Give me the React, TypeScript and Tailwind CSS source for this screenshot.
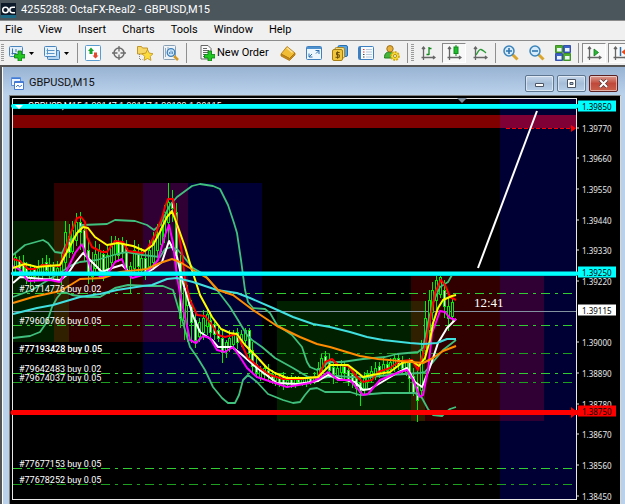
import type { ReactNode } from 'react';
import clsx from 'clsx';

const MENU = ['File', 'View', 'Insert', 'Charts', 'Tools', 'Window', 'Help'];

// Plot box in chart units; prices run linearly from top to bottom
const BOX = { x: 12, y: 98, w: 565, h: 402 };
const PRICE_TOP = 1.39877;
const PRICE_SPAN = 0.01443;

const fraction = (price: number) => (PRICE_TOP - price) / PRICE_SPAN;
const toY = (price: number) => Math.round(BOX.y + fraction(price) * BOX.h) - 0.5;
const toTop = (price: number) => `${(fraction(price) * 100).toFixed(2)}%`;

const TICKS = [1.3977, 1.3966, 1.3955, 1.3944, 1.3933, 1.3922, 1.39, 1.3889, 1.3878, 1.3867, 1.3856, 1.3845];

const MARKS = [
  { price: 1.3985, style: 'bg-[#00ffff] text-black' },
  { price: 1.39252, text: '1.39250', style: 'bg-[#00ffff] text-black' },
  { price: 1.39115, style: 'bg-white text-black' },
  { price: 1.38752, text: '1.38750', style: 'bg-[#ff0000] text-black' },
];

const ORDERS = [
  { id: '#79714776', lots: '0.02', price: 1.39172, dim: false },
  { id: '#79606766', lots: '0.05', price: 1.3906, dim: false },
  { id: '#77193428', lots: '0.05', price: 1.38957, dim: true, strong: true },
  { id: '#79642483', lots: '0.02', price: 1.38888, dim: false },
  { id: '#79674037', lots: '0.05', price: 1.38853, dim: true },
  { id: '#77677153', lots: '0.05', price: 1.38544, dim: false },
  { id: '#77678252', lots: '0.05', price: 1.38487, dim: true },
];

// Session boxes, added on top of each other like light
const SESSIONS = [
  { x: 13, y: 221, w: 56, h: 121, fill: '#002000' },
  { x: 54, y: 183, w: 134, h: 159, fill: '#300000' },
  { x: 143, y: 183, w: 119, h: 200, fill: '#000035' },
  { x: 277, y: 301, w: 148, h: 120, fill: '#002000' },
  { x: 411, y: 276, w: 133, h: 145, fill: '#300000' },
  { x: 500, y: 99, w: 76, h: 400, fill: '#000035' },
  { x: 13, y: 115, w: 563, h: 13, fill: '#800000' },
];

const CURVES = [
  {
    color: '#3fc07c',
    width: 1.8,
    points:
      '13,255 25,245 43,240 48,243 55,252 62,253 67,243 75,237 82,225 107,224 115,220 135,221 147,225 154,230 160,225 170,205 177,197 192,186 200,184 213,186 220,189 228,205 234,223 237,233 241,260 245,290 248,302 253,308 265,309 270,313 277,325 292,335 302,347 307,362 310,367 317,370 322,368 328,362 342,362 363,359 385,357 397,354 418,352 423,348 426,333 428,322 433,303 440,287 448,282 452,275',
  },
  {
    color: '#3fc07c',
    width: 1.8,
    points:
      '13,297 32,290 53,277 72,265 80,262 97,260 117,254 127,252 143,255 160,257 165,249 172,247 178,250 193,268 205,275 217,290 230,307 238,320 247,335 252,340 262,347 275,358 293,368 308,377 320,378 337,376 350,377 370,377 390,375 420,373 425,372 433,362 443,350 456,340',
  },
  {
    color: '#3fc07c',
    width: 1.8,
    points:
      '13,338 30,336 40,332 47,322 52,307 57,298 62,292 67,293 72,295 87,297 100,297 115,288 128,285 150,286 163,286 173,290 178,307 183,323 187,337 190,347 197,357 205,370 213,387 222,398 228,403 235,403 239,395 243,380 248,375 257,382 268,394 283,400 293,403 300,402 305,395 310,389 317,388 325,392 350,392 360,395 383,393 415,393 422,398 428,409 433,415 442,416 445,413 450,409 456,407',
  },
  {
    color: '#ffffff',
    width: 2,
    points:
      '13,283 20,277 43,279 60,280 67,275 75,263 83,253 90,260 102,272 112,268 122,265 130,273 143,275 153,269 162,262 169,241 177,257 183,283 193,316 200,332 212,340 218,347 232,347 240,353 257,368 277,383 297,384 318,381 328,375 340,379 355,382 363,390 370,389 382,382 397,373 407,368 415,382 422,387 430,367 438,343 447,328 456,319',
  },
  {
    color: '#ff00ff',
    width: 2,
    points:
      '13,266 20,270 28,281 50,280 60,282 67,270 75,253 82,244 87,257 92,272 102,277 107,275 115,262 122,259 127,272 132,278 143,275 152,267 158,260 165,235 169,225 173,243 177,277 182,303 187,326 190,340 196,343 203,336 210,338 217,350 225,352 233,347 240,357 247,368 257,377 275,383 287,387 310,383 320,378 328,372 338,380 350,380 363,395 368,394 380,380 397,373 407,370 413,380 420,397 423,395 428,370 432,333 440,311 445,312 450,318 456,320',
  },
  {
    color: '#ff0000',
    width: 2,
    points:
      '13,259 20,261 28,269 35,269 42,265 60,266 65,250 70,235 77,218 81,217 85,222 87,237 92,247 102,252 107,252 115,241 123,242 128,251 143,253 148,248 155,235 162,218 165,207 168,199 173,199 176,218 182,253 185,280 190,300 197,315 205,316 212,325 218,335 225,337 237,334 242,345 248,358 260,368 270,375 283,379 300,379 318,377 325,362 332,359 338,365 348,366 357,377 363,382 372,380 378,372 390,368 400,361 412,360 418,370 425,347 430,320 435,293 441,280 445,285 450,297 456,300',
  },
  {
    color: '#ffff00',
    width: 2,
    points:
      '13,268 25,264 37,267 60,265 68,250 77,233 83,227 88,228 95,237 107,245 118,243 133,246 145,251 153,245 160,232 167,217 172,211 178,227 185,247 192,270 200,295 212,317 221,329 230,333 237,334 245,345 257,357 267,368 275,373 287,378 307,378 318,377 330,365 348,365 357,372 363,377 372,375 390,372 402,363 412,361 419,366 425,358 430,340 433,323 438,308 443,300 452,296 456,295',
  },
  {
    color: '#40e0e0',
    width: 2,
    points:
      '13,314 37,308 53,305 80,297 100,294 117,290 143,286 152,285 167,279 177,278 193,282 217,290 237,293 250,298 273,308 293,317 313,324 330,327 350,332 367,337 383,340 410,343 423,344 437,343 447,339 456,339',
  },
  {
    color: '#ff8c00',
    width: 2,
    points:
      '13,303 33,297 60,291 72,284 80,279 103,278 120,272 147,269 160,263 172,259 180,262 193,270 207,278 218,290 233,295 253,310 277,326 300,337 317,344 330,347 360,356 378,359 400,361 423,363 433,358 443,351 456,346',
  },
];

// high, body top, body bottom, low, 1 = rising
type Candle = [number, number, number, number, number];
const CANDLE_START = 15;
const CANDLE_STEP = 3.83;
const CANDLES: Candle[] = [
  [253, 257, 266, 272, 1], [256, 260, 268, 274, 0], [255, 262, 272, 277, 0], [262, 268, 279, 284, 0],
  [264, 272, 278, 287, 1], [266, 268, 276, 283, 0], [260, 268, 275, 281, 1], [258, 264, 272, 279, 1],
  [255, 262, 270, 276, 0], [258, 264, 272, 281, 1], [262, 266, 271, 281, 0], [261, 268, 274, 282, 1],
  [254, 262, 272, 285, 1], [221, 232, 262, 270, 1], [224, 236, 252, 258, 0], [221, 230, 251, 254, 1],
  [213, 222, 240, 246, 1], [212, 222, 232, 250, 0], [226, 230, 252, 262, 0], [240, 250, 272, 284, 0],
  [252, 262, 276, 282, 1], [241, 254, 268, 275, 1], [244, 250, 270, 278, 1], [250, 254, 276, 281, 0],
  [245, 255, 268, 272, 1], [236, 244, 262, 270, 1], [236, 240, 254, 263, 1], [238, 243, 255, 262, 0],
  [237, 242, 252, 260, 0], [240, 248, 268, 274, 0], [262, 266, 274, 293, 1], [240, 250, 268, 274, 1],
  [244, 252, 266, 276, 0], [248, 258, 270, 276, 1], [252, 258, 272, 280, 0], [240, 250, 266, 276, 1],
  [232, 241, 262, 270, 1], [224, 234, 250, 258, 1], [221, 228, 244, 252, 1], [205, 212, 236, 243, 1],
  [183, 202, 222, 240, 1], [190, 202, 208, 222, 0], [203, 212, 255, 275, 0], [255, 262, 318, 328, 0],
  [275, 288, 320, 340, 1], [285, 296, 305, 342, 1], [300, 306, 322, 343, 0], [312, 320, 340, 348, 0],
  [318, 322, 336, 342, 1], [310, 318, 332, 340, 1], [309, 314, 326, 335, 1], [312, 320, 332, 338, 0],
  [322, 324, 334, 340, 0], [326, 330, 338, 342, 0], [330, 338, 352, 363, 0], [340, 342, 350, 358, 1],
  [330, 338, 346, 352, 1], [330, 334, 344, 350, 1], [328, 332, 342, 349, 0], [330, 334, 342, 347, 1],
  [328, 330, 340, 346, 1], [328, 330, 353, 358, 0], [342, 350, 366, 373, 0], [358, 364, 372, 378, 0],
  [366, 370, 377, 381, 1], [366, 368, 374, 380, 1], [364, 370, 376, 382, 0], [370, 374, 379, 384, 0],
  [372, 376, 380, 386, 1], [374, 377, 382, 387, 0], [372, 376, 383, 390, 0], [376, 380, 384, 388, 1],
  [375, 378, 383, 388, 0], [376, 379, 384, 388, 1], [376, 378, 382, 386, 0], [377, 379, 383, 386, 1],
  [375, 377, 383, 387, 1], [376, 378, 382, 385, 0], [372, 376, 381, 384, 1], [362, 368, 378, 382, 1],
  [354, 358, 372, 378, 1], [351, 356, 362, 370, 0], [354, 360, 370, 378, 0], [360, 367, 374, 384, 0],
  [364, 368, 376, 381, 1], [360, 364, 372, 378, 1], [362, 366, 373, 380, 0], [366, 370, 380, 386, 0],
  [370, 374, 382, 388, 0], [372, 378, 388, 396, 0], [376, 382, 392, 406, 0], [372, 378, 388, 394, 1],
  [370, 374, 382, 388, 1], [366, 371, 379, 383, 1], [362, 368, 376, 380, 1], [362, 366, 372, 378, 0],
  [358, 364, 371, 376, 1], [361, 364, 370, 374, 0], [358, 362, 369, 373, 1], [354, 358, 367, 372, 1],
  [354, 358, 364, 370, 0], [356, 360, 368, 374, 0], [360, 362, 372, 376, 1], [358, 362, 378, 393, 0],
  [368, 376, 392, 396, 0], [370, 386, 400, 422, 0], [340, 350, 390, 396, 1], [301, 318, 350, 360, 1],
  [290, 300, 330, 340, 1], [282, 290, 312, 320, 1], [275, 280, 300, 310, 1], [275, 277, 294, 298, 1],
  [280, 290, 306, 318, 0], [298, 306, 318, 331, 1], [299, 302, 316, 322, 1],
];

function Chart() {
  return (
    <svg
      className="absolute inset-0 h-full w-full overflow-visible"
      viewBox={`${BOX.x} ${BOX.y} ${BOX.w} ${BOX.h}`}
      preserveAspectRatio="none"
      role="img"
      aria-label="GBPUSD M15 candles"
    >
      <g className="isolate" shapeRendering="crispEdges">
        <rect x="12" y="98" width="565" height="402" fill="#000" />
        {SESSIONS.map((s, i) => (
          <rect key={i} className="mix-blend-screen" x={s.x} y={s.y} width={s.w} height={s.h} fill={s.fill} />
        ))}
      </g>

      <g shapeRendering="crispEdges">
        <path d="M13 311.5H576" stroke="#8394a0" />
        {ORDERS.map((o) => (
          <path
            key={o.id}
            d={`M13 ${toY(o.price)}H576`}
            stroke={o.dim ? '#1f9f1f' : '#32cd32'}
            strokeDasharray="9 5 3 5"
          />
        ))}
      </g>

      {CANDLES.map(([high, top, bottom, low, up], i) => {
        const x = Math.round(CANDLE_START + i * CANDLE_STEP);
        return (
          <g key={i} shapeRendering="crispEdges" stroke="#00ee00">
            <path d={`M${x + 0.5} ${high}V${low}`} />
            <rect x={x - 0.5} y={top + 0.5} width="2" height={bottom - top} fill={up ? '#000' : '#fff'} />
          </g>
        );
      })}

      {CURVES.map((c, i) => (
        <polyline key={i} points={c.points} fill="none" stroke={c.color} strokeWidth={c.width} strokeLinejoin="round" />
      ))}

      {/* Take profit */}
      <path d="M506 128.5H571" stroke="#ff0000" strokeDasharray="4 2" />
      <path d="M571 125l5 3.500-5 3.500z" fill="#ff0000" />
      <path d="M478 268L537 111" stroke="#fff" strokeWidth="2" />

      {/* Frame */}
      <path d="M12.500 500V98.500H576.500V500M12 499.500H577" fill="none" stroke="#e8e8e8" shapeRendering="crispEdges" />
      <path d="M457 98h10l-5 5z" fill="#7c8c9c" />
    </svg>
  );
}

// Horizontal levels lie over the header text
function Levels() {
  return (
    <svg
      className="absolute inset-0 h-full w-full overflow-visible"
      viewBox={`${BOX.x} ${BOX.y} ${BOX.w} ${BOX.h}`}
      preserveAspectRatio="none"
      aria-hidden="true"
    >
      <path d="M13 106H577M13 273.500H577" stroke="#00ffff" strokeWidth="4" strokeLinecap="round" />
      <path d="M13 108.500H577M13 275.500H577" stroke="#00d0d8" />
      <path d="M13 412.500H577" stroke="#ff0000" strokeWidth="5" strokeLinecap="round" />
      <path d="M571 407l7 5.500-7 5.500z" fill="#ff0000" />
      <path d="M15 105h8l-4 4z" fill="#fff" />
    </svg>
  );
}

function Icon({ children }: { children: ReactNode }) {
  return (
    <svg className="h-4 w-4 shrink-0" viewBox="0 0 16 16" fill="none" aria-hidden="true">
      {children}
    </svg>
  );
}

const plus = <path d="M9 6h3.500v3.500H16V13h-3.500v3H9v-3H5.500V9.500H9z" fill="#22c822" stroke="#0a7a12" strokeWidth=".8" />;
const axes = <path d="M3.500 2v13M1.500 12.500H15M2 4l1.500-2L5 4M13 11l2 1.500-2 1.500" stroke="#666" strokeWidth="1.300" />;

const ICONS: Record<string, ReactNode> = {
  newChart: (
    <Icon>
      <rect x=".5" y="1.500" width="13" height="10" rx="1" fill="#e3f0fb" stroke="#4a86bd" />
      <path d="M3.500 3.500v6M2.500 8.500h5M7 4v3" stroke="#3a76ad" />
      {plus}
    </Icon>
  ),
  profiles: (
    <Icon>
      <rect x="3.500" y="5.500" width="12" height="9" rx="1" fill="#b4d4f0" stroke="#3f7db5" />
      <rect x=".5" y="1.500" width="12" height="10" rx="1" fill="#e6f2fc" stroke="#4a86bd" />
      <path d="M3.500 3.500v6M2.500 5.500h8M2.500 8.500h8" stroke="#5b94c6" />
    </Icon>
  ),
  marketWatch: (
    <Icon>
      <rect x=".5" y=".5" width="15" height="15" rx="1" fill="#fbfdff" stroke="#5a9bd0" />
      <path d="M6 2.500l3 3.500H7.500v3h-3V6H3z" fill="#16a52a" />
      <path d="M10.500 13.500l-3-3H9v-3h3v3h1.500z" fill="#e2482c" />
    </Icon>
  ),
  dataWindow: (
    <Icon>
      <circle cx="8" cy="8" r="5" stroke="#6c6c6c" strokeWidth="1.500" />
      <path d="M8 1v5.500M8 9.500V15M1 8h5.500M9.500 8H15" stroke="#6c6c6c" strokeWidth="1.300" />
    </Icon>
  ),
  navigator: (
    <Icon>
      <path d="M.5 1.500h4l1 1.500h5v6H.5z" fill="#f7d766" stroke="#c3962a" />
      <path d="M2.500 9v5.500h3" stroke="#888" strokeDasharray="1 1" />
      <path d="M10.500 4.500l1.800 3.600 3.700.6-2.700 2.700.6 4-3.400-1.900L7 15.400l.7-4L5 8.700l3.800-.6z" fill="#fcdc3c" stroke="#bd8f1a" strokeWidth=".8" />
    </Icon>
  ),
  tester: (
    <Icon>
      <rect x=".5" y=".5" width="12" height="14" rx="1" fill="#eef3f8" stroke="#8aa0b4" />
      <path d="M2.500 3v9M5 2v4" stroke="#92a8bb" />
      <circle cx="8" cy="7.500" r="3.800" fill="#cfe6f8" stroke="#3c7fbb" strokeWidth="1.300" />
      <path d="M6.500 9V7M8 9V5.500M9.500 9V6.500" stroke="#3c7fbb" strokeWidth=".8" />
      <path d="M11 11l4 4" stroke="#d39a25" strokeWidth="2.500" />
    </Icon>
  ),
  newOrder: (
    <Icon>
      <path d="M2 .5h7l3 3V14H2z" fill="#fafafa" stroke="#666" />
      <path d="M4 3.500h4M4 5.500h6M4 7.500h5M4 9.500h3M4 11.500h3" stroke="#666" />
      {plus}
    </Icon>
  ),
  metaEditor: (
    <Icon>
      <path d="M1 9l6-7.500L15 8l-5.500 5.500z" fill="#f2bd36" stroke="#a8740f" strokeWidth=".8" />
      <path d="M1 9v2l8.500 4.500L15 10V8l-5.500 5.500z" fill="#c98a16" stroke="#a8740f" strokeWidth=".8" />
      <path d="M7 3l5.500 4.500" stroke="#fbe39a" strokeWidth="1.500" />
    </Icon>
  ),
  fullScreen: (
    <Icon>
      <rect x=".5" y="1.500" width="15" height="13" rx="1" fill="#eef6fd" stroke="#3f7fbd" />
      <path d="M1 3h14" stroke="#4f90cf" strokeWidth="2" />
      <path d="M9.500 5.500H13V9M13 5.500L10 8.500M6.500 12H3V8.500M3 12l3-3" stroke="#2c6eae" />
    </Icon>
  ),
  signals: (
    <Icon>
      <rect x="6" y=".5" width="9.500" height="11" rx="1.500" fill="#57a5e4" stroke="#276fae" />
      <rect x="3" y="2.500" width="9.500" height="10.500" rx="1.500" fill="#f4dc7a" stroke="#a98525" />
      <rect x=".5" y="4.500" width="10" height="11" rx="1.500" fill="#f0c63c" stroke="#a57d14" />
      <path d="M7.700 7.500H4.500v2.300h2.800v2.500H3.500M5.600 6.300v7.400" stroke="#6b4e08" />
    </Icon>
  ),
  journal: (
    <Icon>
      <rect x=".5" y="1.500" width="15" height="13" rx="1" fill="#f7fafd" stroke="#3d7fc0" />
      <path d="M2 2v12" stroke="#3d7fc0" strokeWidth="2" />
      <path d="M5 4.500h1.500M5 7h1.500" stroke="#e23a2a" />
      <path d="M5 9.500h1.500M5 12h1.500" stroke="#444" />
      <path d="M8 4.500h6M8 7h6M8 9.500h6M8 12h6" stroke="#b8c8d8" />
    </Icon>
  ),
  autoTrading: (
    <Icon>
      <path d="M.5 13c0-5 2-6 5.500-6s5 2 5 6z" fill="#46b33a" stroke="#24801c" />
      <circle cx="6" cy="3.800" r="3.200" fill="#e8b23a" stroke="#a0701a" />
      <circle cx="11" cy="11" r="4" fill="#f7dc3a" stroke="#d0aa1a" strokeWidth="1.800" strokeDasharray="2 1" />
      <circle cx="11" cy="11" r="1.500" fill="#fff" stroke="#b08c10" />
    </Icon>
  ),
  bars: (
    <Icon>
      {axes}
      <path d="M9 2v8M9 3.500h2.500M6.500 9.500H9" stroke="#138a1e" strokeWidth="1.300" />
    </Icon>
  ),
  candles: (
    <Icon>
      {axes}
      <path d="M10 0v11" stroke="#138a1e" />
      <rect x="8" y="2" width="4" height="6.500" fill="#1fbe2c" stroke="#138a1e" />
    </Icon>
  ),
  line: (
    <Icon>
      {axes}
      <path d="M4 10c2-3 3-6 5-5.500s3 2 5 3.500" stroke="#2b9a35" strokeWidth="1.300" />
    </Icon>
  ),
  zoomIn: (
    <Icon>
      <path d="M9.500 9.500l5 5" stroke="#d9a52c" strokeWidth="3" />
      <circle cx="6" cy="6" r="5" fill="#d5eafa" stroke="#3b84bb" strokeWidth="1.500" />
      <path d="M3 6h6M6 3v6" stroke="#2e75ad" strokeWidth="1.600" />
    </Icon>
  ),
  zoomOut: (
    <Icon>
      <path d="M9.500 9.500l5 5" stroke="#d9a52c" strokeWidth="3" />
      <circle cx="6" cy="6" r="5" fill="#d5eafa" stroke="#3b84bb" strokeWidth="1.500" />
      <path d="M3 6h6" stroke="#2e75ad" strokeWidth="1.600" />
    </Icon>
  ),
  tile: (
    <Icon>
      <path d="M.5.500h7v7h-7zM8.500 8.500h7v7h-7z" fill="#4fae2c" stroke="#3f8f28" />
      <path d="M8.500.500h7v7h-7zM.5 8.500h7v7h-7z" fill="#3a62c8" stroke="#3450a8" />
      <path d="M2 3h4.500v3.500H2zM10 3h4.500v3.500H10zM2 11h4.500v3.500H2zM10 11h4.500v3.500H10z" fill="#eef4fb" />
    </Icon>
  ),
  autoScroll: (
    <Icon>
      {axes}
      <path d="M8 4l4.500 3.500L8 11z" fill="#27b636" stroke="#117a1c" strokeWidth=".8" />
    </Icon>
  ),
  chartShift: (
    <Icon>
      {axes}
      <path d="M8.500 2v9" stroke="#2b6ea8" strokeWidth="1.500" />
      <path d="M14 3.500L9.500 7l4.500 3.500V8h2V6h-2z" fill="#e04a1c" />
    </Icon>
  ),
};

function Tool({ icon, label, pressed = false }: { icon: string; label: string; pressed?: boolean }) {
  return (
    <button
      type="button"
      aria-label={label}
      aria-pressed={pressed}
      className={clsx(
        'mx-px flex h-5 w-6 shrink-0 items-center justify-center',
        pressed && 'border border-[#fff] border-t-[#8a8a8a] border-l-[#8a8a8a] bg-[#f8f8f8]',
      )}
    >
      {ICONS[icon]}
    </button>
  );
}

function DropTool({ icon, label }: { icon: string; label: string }) {
  return (
    <button type="button" aria-label={label} className="flex h-5 w-[35px] shrink-0 items-center gap-1 pl-1">
      {ICONS[icon]}
      <svg className="h-[3px] w-[5px]" viewBox="0 0 5 3" aria-hidden="true">
        <path d="M0 0h5L2.500 3z" />
      </svg>
    </button>
  );
}

const Separator = () => <div className="mx-0.5 h-5 w-px shrink-0 bg-[#8f8f8f]" />;
const Grip = () => <div className="mx-px h-[18px] w-[3px] shrink-0 bg-[repeating-linear-gradient(#9a9a9a_0_1px,#f0f0f0_1px_2px)]" />;

function Toolbar() {
  return (
    <div className="flex h-[25px] shrink-0 items-center overflow-hidden border-t border-[#8c8c8c] bg-[#f0f0f0]">
      <Grip />
      <DropTool icon="newChart" label="New chart" />
      <DropTool icon="profiles" label="Profiles" />
      <Separator />
      <Tool icon="marketWatch" label="Market watch" />
      <Tool icon="dataWindow" label="Data window" />
      <Tool icon="navigator" label="Navigator" />
      <Tool icon="tester" label="Strategy tester" />
      <Separator />
      <button type="button" className="flex h-5 w-[86px] shrink-0 items-center gap-0.5 pl-2.5 text-[11px] whitespace-nowrap">
        {ICONS.newOrder}
        New Order
      </button>
      <Tool icon="metaEditor" label="Editor" />
      <Tool icon="fullScreen" label="Full screen" />
      <Tool icon="signals" label="Signals" />
      <Tool icon="journal" label="Journal" />
      <Tool icon="autoTrading" label="Auto trading" />
      <Separator />
      <Grip />
      <Tool icon="bars" label="Bar chart" />
      <Tool icon="candles" label="Candlesticks" pressed />
      <Tool icon="line" label="Line chart" />
      <Separator />
      <Tool icon="zoomIn" label="Zoom in" />
      <Tool icon="zoomOut" label="Zoom out" />
      <Tool icon="tile" label="Tile windows" />
      <Separator />
      <Tool icon="autoScroll" label="Auto scroll" pressed />
      <Tool icon="chartShift" label="Chart shift" pressed />
    </div>
  );
}

function WindowButton({ label, close = false, children }: { label: string; close?: boolean; children: ReactNode }) {
  return (
    <button
      type="button"
      aria-label={label}
      className={clsx(
        'flex h-[17px] w-[29px] items-center justify-center rounded-[2px] border shadow-[inset_0_0_0_1px_rgba(255,255,255,0.5)]',
        close
          ? 'border-[#5c2020] bg-linear-to-b from-[#d99a90] via-[#c0483a] to-[#c8604c]'
          : 'border-[#5f7690] bg-linear-to-b from-[#c4d6ea] via-[#a5bdd8] to-[#b8cfe8]',
      )}
    >
      <svg className="h-[9px] w-[13px]" viewBox="0 0 13 9" fill="none" aria-hidden="true">
        {children}
      </svg>
    </button>
  );
}

function PriceAxis() {
  return (
    <div className="relative w-[43px] shrink-0 font-['Noto_Sans',sans-serif] text-[8px] leading-[11px] text-[#e8e8e8]">
      {TICKS.map((price) => (
        <div key={price} className="absolute left-0 flex -translate-y-1/2 items-center gap-[3px]" style={{ top: toTop(price) }}>
          <span className="h-px w-0.5 bg-[#e8e8e8]" />
          {price.toFixed(5)}
        </div>
      ))}
      {MARKS.map((m) => (
        <div
          key={m.price}
          className={clsx('absolute left-px w-[38px] -translate-y-1/2 pl-1', m.style)}
          style={{ top: toTop(m.price) }}
        >
          {m.text ?? m.price.toFixed(5)}
        </div>
      ))}
    </div>
  );
}

function ChartWindow() {
  return (
    <section className="flex min-h-0 flex-1 flex-col border-l border-white bg-[#b9d1ea]">
      <header className="flex h-7 shrink-0 items-center bg-linear-to-b from-[#98b3d3] to-[#bbd2eb] pt-1 pr-[7px] pl-2">
        <svg className="h-[13px] w-[13px]" viewBox="0 0 13 13" fill="none" aria-hidden="true">
          <path d="M.5.500h9v8h-9z" fill="#e9f3ff" stroke="#5b8fdc" />
          <path d="M3.500 4.500h9v8h-9z" fill="#fff" stroke="#4479d4" />
          <path d="M1 1.500h8M4 5.500h8M5 10l2-2 1.500 2L11 8" stroke="#4479d4" />
        </svg>
        <h1 className="ml-[5px] flex-1 text-[11px] text-[#111]">GBPUSD,M15</h1>
        <div className="flex gap-[3px]">
          <WindowButton label="Minimize">
            <path d="M2.500 4.500h8v3h-8z" fill="#fff" stroke="#4b5563" />
          </WindowButton>
          <WindowButton label="Maximize">
            <path d="M2.500.500h8v8h-8z" fill="#fff" stroke="#4b5563" />
            <path d="M5 3.500h3v2H5z" fill="#a5bdd8" stroke="#4b5563" />
          </WindowButton>
          <WindowButton label="Close" close>
            <path d="M3 1l7 7M10 1L3 8" stroke="#5a3a3a" strokeWidth="3.500" />
            <path d="M3 1l7 7M10 1L3 8" stroke="#fff" strokeWidth="2" />
          </WindowButton>
        </div>
      </header>

      <div className="mr-1 ml-1.5 flex min-h-0 flex-1 border border-b-0 border-[#808080] border-r-[#d8d8d8] bg-black pt-0.5 pb-1 pl-0.5">
        <div className="relative min-w-0 flex-1">
          <Chart />
          <p className="absolute top-[3px] left-4 text-[9px] leading-[11px] whitespace-nowrap text-white">
            GBPUSD,M15 1.39147 1.39147 1.39103 1.39115
          </p>
          <Levels />
          {ORDERS.map((o) => (
            <span
              key={o.id}
              className={clsx(
                'absolute left-[7px] -translate-y-full text-[9px] leading-[9px] whitespace-nowrap text-white',
                o.strong && 'font-medium',
              )}
              style={{ top: toTop(o.price) }}
            >
              {o.id} buy {o.lots}
            </span>
          ))}
          <time className="absolute top-[51%] right-[13%] -translate-y-1/2 font-['Liberation_Serif',serif] text-[13px] leading-4 text-white">
            12:41
          </time>
        </div>
        <PriceAxis />
      </div>
    </section>
  );
}

export default function App() {
  return (
    <div className="flex h-screen flex-col overflow-hidden bg-[#f0f0f0] font-[Roboto,'Noto_Sans',sans-serif] text-black">
      <div className="flex h-5 shrink-0 items-center gap-[5px] bg-[#4a555c] pl-px">
        <svg className="h-[15px] w-[15px]" viewBox="0 0 15 15" fill="none" aria-hidden="true">
          <rect width="15" height="15" fill="#0c1a2a" />
          <rect y="12" width="15" height="3" fill="#1c6a86" />
          <circle cx="4.500" cy="7" r="2.800" stroke="#fff" strokeWidth="1.500" />
          <path d="M14 4.300h-2.500a2.700 2.700 0 000 5.400H14" stroke="#fff" strokeWidth="1.500" />
        </svg>
        <span className="text-[11px] text-white">4255288: OctaFX-Real2 - GBPUSD,M15</span>
      </div>

      <nav className="flex h-5 shrink-0 items-center gap-4 border-t border-[#8c8c8c] pl-[5px] text-[11px]">
        {MENU.map((item) => (
          <button key={item} type="button">
            {item}
          </button>
        ))}
      </nav>

      <Toolbar />

      <main className="flex min-h-0 flex-1 flex-col border-t-2 border-l-2 border-[#555] bg-black">
        <ChartWindow />
      </main>
    </div>
  );
}
